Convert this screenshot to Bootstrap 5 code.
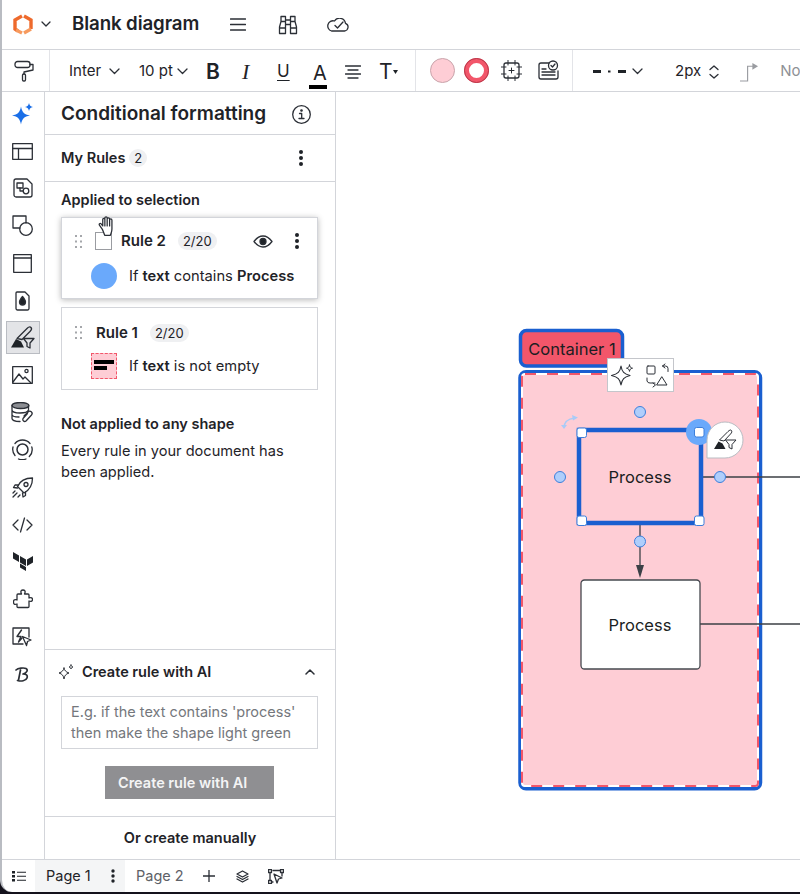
<!DOCTYPE html>
<html lang="en">
  <head>
    <meta charset="UTF-8" />
    <meta name="viewport" content="width=device-width, initial-scale=1.0" />
    <title>Blank diagram</title>
    <link
      href="https://cdn.jsdelivr.net/npm/bootstrap@5.3.0/dist/css/bootstrap.min.css"
      rel="stylesheet"
    />
    <style>
      html, body { height: 100%; overflow: hidden; background: #14121c; }
      body { font-family: Inter, "Liberation Sans", sans-serif; color: #1f2328; }
      svg { display: block; flex: none; }
      .ic { fill: none; stroke: #2b2f36; stroke-width: 1.3; stroke-linecap: round; stroke-linejoin: round; }
      .app-frame { height: 892px; background: #fff; border-left: 2px solid #b9bcc2; border-bottom-left-radius: 12px; overflow: hidden; }
      .top-bar { height: 49px; flex: none; padding-left: 11px; }
      .logo-gap { margin-left: 8px; }
      .doc-title { font-size: 18.700px; font-weight: 600; margin: 0 31px 0 21px; letter-spacing: -.1px; line-height: 1; }
      .binoc-gap { margin-left: 32px; }
      .cloud-gap { margin-left: 29px; }
      .tool-bar { height: 43px; flex: none; border-top: 1.5px solid #d3d5da; border-bottom: 1.5px solid #d3d5da; overflow: hidden; }
      .tool-sec { height: 100%; flex: none; border-right: 1.5px solid #e3e4e8; }
      .sec-paint { width: 48px; padding-left: 12px; }
      .sec-text { width: 366px; padding: 2px 0 0 19px; font-size: 15px; }
      .sec-shape { width: 157px; padding-left: 14px; }
      .sec-line { flex: none; padding: 2px 0 0 20px; font-size: 15px; white-space: nowrap; }
      .t-font { width: 70px; }
      .t-size { width: 67px; }
      .t-b { width: 36px; font-size: 21px; font-weight: 600; line-height: 1; }
      .t-i { width: 35px; font-family: "Liberation Serif", serif; font-size: 22px; font-style: italic; line-height: 1; }
      .t-u { width: 32px; font-size: 17px; text-decoration: underline; text-decoration-thickness: 1px; text-underline-offset: 3px; }
      .t-a { width: 36px; font-size: 20px; padding-top: 8px; }
      .a-bar { height: 4px; width: 18px; background: #000; margin-top: 2px; }
      .t-al { width: 34px; }
      .t-t { font-size: 21px; font-weight: 400; }
      .swatch { width: 25px; height: 25px; border-radius: 50%; }
      .swatch-fill { background: #fecdd5; border: 1px solid #c9a4ab; margin-right: 9px; }
      .swatch-line { background: #fff; border: 5px solid #f2566a; outline: 1px solid #b7394a; outline-offset: -1px; margin-right: 12px; }
      .dash-gap { margin-right: 5px; }
      .width-gap { margin-left: 32px; }
      .corner-gap { margin-left: 21px; }
      .none-gap { margin-left: 21px; color: #8f9196; }
      .main-row { min-height: 0; }
      .side-rail { width: 43px; flex: none; border-right: 1.5px solid #d3d5da; padding-top: 3px; }
      .rail-btn { width: 35px; height: 37.400px; margin-left: 3px; }
      .rail-on { background: #e3e4e7; border: 1px solid #b9bcc2; height: 33px; margin: 2px 0 2px 4px; width: 34px; }
      .side-panel { width: 291px; flex: none; border-right: 1.5px solid #d3d5da; font-size: 15px; }
      .panel-head { height: 43px; flex: none; padding: 3px 24px 0 16px; border-bottom: 1.5px solid #d3d5da; }
      .panel-head h1 { font-size: 19px; font-weight: 600; margin: 0; }
      .rules-head { height: 47px; flex: none; padding: 0 32px 0 16px; border-bottom: 1.5px solid #d3d5da; }
      .sec-label { font-size: 14.500px; font-weight: 600; }
      .count-pill { background: #eff0f2; border-radius: 9px; font-size: 13px; padding: 0 5px; line-height: 18px; font-weight: 400; }
      .applied { padding: 7px 17px 0 16px; }
      .rule-box { background: #fff; border: 1.5px solid #d3d5da; position: relative; }
      .rule-lift { height: 82px; box-shadow: 0 1px 6px rgba(0,0,0,.28); margin-top: 6px; }
      .rule-plain { height: 83px; margin-top: 8px; }
      .rule-top { height: 45px; padding: 2px 18px 0 13px; }
      .rule-plain .rule-top { padding-top: 5px; }
      .rule-name { font-size: 15px; font-weight: 600; margin-right: 12px; }
      .rule-blank { width: 17px; height: 18px; border: 1px solid #9a9ca1; margin: 0 9px 0 13px; }
      .grip-gap { margin-right: 14px; }
      .eye-gap { margin-right: 22px; }
      .rule-line { font-size: 14.700px; padding-left: 29px; }
      .rule-dot { width: 26px; height: 26px; border-radius: 50%; background: #6aa9fb; margin-right: 12px; flex: none; }
      .rule-swatch { width: 26px; height: 26px; background: #fecdd5; border: 1px dashed #f2566a; margin-right: 12px; padding: 6px 2px; flex: none; }
      .rule-swatch i { display: block; height: 4px; background: #000; margin-bottom: 2px; }
      .rule-swatch i + i { width: 13px; margin-bottom: 0; }
      .hand-cursor { position: absolute; left: 36px; top: -2px; }
      .not-applied { padding: 23px 30px 0 16px; }
      .not-applied p { font-size: 14.600px; line-height: 21px; margin: 6px 0 0; }
      .ai-box { margin-top: auto; border-top: 1.5px solid #d3d5da; flex: none; }
      .ai-head { height: 46px; padding: 0 20px 3px 13px; }
      .ai-spark { margin-right: 8px; }
      .ai-input { margin: 0 17px 0 16px; border: 1.5px solid #d3d5da; height: 53px; padding: 4px 9px; font-size: 14.500px; line-height: 21px; color: #74777c; white-space: nowrap; overflow: hidden; }
      .ai-btn { width: 169px; height: 33px; margin: 17px 0 17px 60px; padding: 0 0 0 13px; background: #8f8f92; color: #f4f4f5; border-radius: 0; border: 0; font-size: 14.500px; font-weight: 600; text-align: left; }
      .manual-row { height: 43px; flex: none; border-top: 1.5px solid #d3d5da; font-size: 14.500px; font-weight: 600; }
      .bottom-bar { height: 33px; flex: none; border-top: 1.5px solid #d3d5da; font-size: 14.500px; padding-left: 10px; }
      .page-on { width: 90px; height: 100%; margin-left: 9px; padding: 0 10px 0 11px; background: #f4f5f6; }
      .page-off { color: #5e6167; margin: 0 19px 0 11px; }
      .add-gap { margin-right: 21px; }
      .layer-gap { margin-right: 19px; }
      .canvas-area { position: relative; overflow: hidden; background: #fff; }
      .canvas-art { position: absolute; left: 0; top: 0; }
      .shape-text { font-family: Inter, "Liberation Sans", sans-serif; font-size: 16.500px; fill: #1b1e22; text-anchor: middle; }
    </style>
  </head>
  <body>
    <div class="app-frame d-flex flex-column position-relative">
      <header class="top-bar d-flex align-items-center">
        <svg width="20" height="21" viewBox="0 0 20 21" fill="none" stroke-width="3.400">
          <path d="M9 2 2 6v9l3 2" stroke="#ee6a2c"/>
          <path d="M11 2l7 4v9" stroke="#ee6a2c"/>
          <path d="M18 15l-7 4" stroke="#f79a5e"/>
          <path d="M3 16l6 3" stroke="#f79a5e"/>
        </svg>
        <svg class="ic logo-gap" width="10" height="7" viewBox="0 0 10 7"><path d="M1 1l4 4 4-4"/></svg>
        <div class="doc-title">Blank diagram</div>
        <svg class="ic" width="16" height="13" viewBox="0 0 16 13"><path d="M.5 1h15M.5 6.500h15M.5 12h15"/></svg>
        <svg class="ic binoc-gap" width="20" height="20" viewBox="0 0 20 20"><path d="M3 1.500h4.500v5H3zM12.500 1.500H17v5h-4.500zM7.500 5h5v4.500h-5zM3 6.500 1.500 12v6.500h6V9.500M17 6.500l1.500 5.500v6.500h-6V9.500M1.500 13h6M12.500 13h6"/></svg>
        <svg class="ic cloud-gap" width="22" height="14" viewBox="0 0 22 14"><path d="M4.500 13h13a4 4 0 0 0 1-7.700 6 6 0 0 0-11-2.300 4.800 4.800 0 0 0-3 10zM8 7.500l2.500 2.500 5.500-6"/></svg>
      </header>

      <div class="tool-bar d-flex align-items-center">
        <div class="tool-sec sec-paint d-flex align-items-center">
          <svg class="ic" width="21" height="22" viewBox="0 0 21 22"><rect x="1" y="1.500" width="15" height="6" rx="2.500"/><path d="M16 4.500h3v5.500l-9 2v2"/><rect x="8.500" y="14" width="3" height="7" rx="1.200"/></svg>
        </div>
        <div class="tool-sec sec-text d-flex align-items-center">
          <div class="t-font d-flex align-items-center gap-2">Inter <svg class="ic" width="11" height="7" viewBox="0 0 11 7"><path d="M1 1l4.500 4.500L10 1"/></svg></div>
          <div class="t-size d-flex align-items-center gap-1 text-nowrap">10 pt <svg class="ic" width="11" height="7" viewBox="0 0 11 7"><path d="M1 1l4.500 4.500L10 1"/></svg></div>
          <div class="t-b">B</div>
          <div class="t-i">I</div>
          <div class="t-u">U</div>
          <div class="t-a d-flex flex-column align-items-start lh-1"><span class="ms-1">A</span><div class="a-bar"></div></div>
          <div class="t-al"><svg class="ic" width="16" height="14" viewBox="0 0 16 14"><path d="M.5 1h15M3 5h10M.5 9h15M3 13h10"/></svg></div>
          <div class="t-t d-flex align-items-center">T<svg width="5" height="4" viewBox="0 0 5 4"><path d="M0 0h5L2.500 4z" fill="#1f2328"/></svg></div>
        </div>
        <div class="tool-sec sec-shape d-flex align-items-center">
          <div class="swatch swatch-fill"></div>
          <div class="swatch swatch-line"></div>
          <svg class="ic me-3" width="21" height="21" viewBox="0 0 21 21"><rect x="3" y="3" width="15" height="15" rx="2"/><path d="M7 0v5M14 0v5M7 16v5M14 16v5M0 7h5M0 14h5M16 7h5M16 14h5M10.500 8v5M8 10.500h5" stroke-width="1"/></svg>
          <svg class="ic" width="21" height="21" viewBox="0 0 21 21"><path d="M11 3H3a2 2 0 0 0-2 2v12a2 2 0 0 0 2 2h15a2 2 0 0 0 2-2v-6M4 9h4M4 12h13M4 15h13"/><circle cx="15" cy="5.500" r="4.500"/><path d="M13 5.500l1.500 1.500 2.500-3"/></svg>
        </div>
        <div class="sec-line d-flex align-items-center">
          <svg class="dash-gap" width="34" height="3" viewBox="0 0 34 3"><path d="M0 0h8v3H0zM15 .5h2.500v2H15zM25 0h8v3h-8z" fill="#1f2328"/></svg>
          <svg class="ic" width="11" height="7" viewBox="0 0 11 7"><path d="M1 1l4.500 4.500L10 1"/></svg>
          <span class="width-gap">2px</span>
          <svg class="ic ms-2" width="10" height="14" viewBox="0 0 10 14"><path d="M1 4.500 5 1l4 3.500M1 9.500 5 13l4-3.500"/></svg>
          <svg class="corner-gap" width="19" height="20" viewBox="0 0 20 20"><path d="M0 19.500h8V4h7" fill="none" stroke="#9a9ca1" stroke-width="1.200"/><path d="M13 .5 19 4l-6 3.500z" fill="#9a9ca1"/></svg>
          <span class="none-gap">No</span>
        </div>
      </div>

      <div class="main-row d-flex flex-grow-1">
        <nav class="side-rail d-flex flex-column">
          <div class="rail-btn d-flex align-items-center justify-content-center">
            <svg width="22" height="22" viewBox="0 0 22 22"><path d="M9 3.500C10 9 12 11.500 18 12.500 12 13.500 10 16 9 21.500 8 16 6 13.500 0 12.500 6 11.500 8 9 9 3.500Z" fill="#1a6fe8"/><path d="M17 0c.5 2.500 1.500 3.500 4 4-2.500.5-3.500 1.500-4 4-.5-2.500-1.500-3.500-4-4 2.500-.5 3.500-1.500 4-4Z" fill="#1a6fe8"/></svg>
          </div>
          <div class="rail-btn d-flex align-items-center justify-content-center">
            <svg class="ic" width="21" height="17" viewBox="0 0 21 17"><rect x=".7" y=".7" width="19.600" height="15.600"/><path d="M.7 5.500h19.600M6.500 5.500v10.800"/></svg>
          </div>
          <div class="rail-btn d-flex align-items-center justify-content-center">
            <svg class="ic" width="20" height="20" viewBox="0 0 20 20"><path d="M3 1h11l5 5v11a2 2 0 0 1-2 2H3a2 2 0 0 1-2-2V3a2 2 0 0 1 2-2Z"/><rect x="4" y="5" width="6" height="5"/><circle cx="13" cy="13" r="2.800"/><path d="M7 10v3h3"/></svg>
          </div>
          <div class="rail-btn d-flex align-items-center justify-content-center">
            <svg class="ic" width="21" height="21" viewBox="0 0 21 21"><path d="M8 13H1V1h13v7"/><circle cx="14" cy="14" r="6.300"/></svg>
          </div>
          <div class="rail-btn d-flex align-items-center justify-content-center">
            <svg class="ic" width="19" height="19" viewBox="0 0 19 19"><rect x=".7" y=".7" width="17.600" height="17.600"/><path d="M.7 4h17.600"/></svg>
          </div>
          <div class="rail-btn d-flex align-items-center justify-content-center">
            <svg class="ic" width="15" height="20" viewBox="0 0 15 20"><path d="M2 1h8l4 4v12.500a1.500 1.500 0 0 1-1.500 1.500h-10A1.500 1.500 0 0 1 1 17.500V2a1 1 0 0 1 1-1Z"/><path d="M7.500 5.500c2 2.500 3 4 3 5.500a3 3 0 0 1-6 0c0-1.500 1-3 3-5.500Z" fill="#1f2328"/></svg>
          </div>
          <div class="rail-btn rail-on d-flex align-items-center justify-content-center">
            <svg width="24" height="23" viewBox="0 0 24 23"><path d="M0 21.500 5 13l5 2.500 3 6z" fill="#1f2328"/><path class="ic" d="M6 12.500 16 2.500c1.500-1.500 3-2 4-1s.5 2.500-1 4L11 13.500ZM12.500 12.500H23l-4 4.500v5l-3-1.500V17Z" fill="#e3e4e7" stroke-width="1.100"/></svg>
          </div>
          <div class="rail-btn d-flex align-items-center justify-content-center">
            <svg class="ic" width="21" height="18" viewBox="0 0 21 18"><rect x=".7" y=".7" width="19.600" height="16.600"/><circle cx="14.500" cy="5" r="1.600"/><path d="M1 16 7 8l4 5 2-2 6 6"/></svg>
          </div>
          <div class="rail-btn d-flex align-items-center justify-content-center">
            <svg class="ic" width="23" height="21" viewBox="0 0 23 21"><ellipse cx="9.500" cy="3.500" rx="8.500" ry="3" fill="#8b8d92"/><path d="M1 3.500v13c0 1.500 3 3 8 3M1 8c0 1.500 3 3 8 3s8-1 8.500-3V4M1 12.500c0 1.500 3 2.500 7 2.500"/><path d="M13 14l4-4a2.200 2.200 0 0 1 3.500 3l-5.500 6a2 2 0 0 1-3-2.500l4.500-5"/></svg>
          </div>
          <div class="rail-btn d-flex align-items-center justify-content-center">
            <svg class="ic" width="21" height="21" viewBox="0 0 21 21"><circle cx="10.500" cy="10.500" r="5.500" stroke-width="1.500"/><path d="M3 4.500a9.800 9.800 0 0 1 15 0M19.800 8a9.800 9.800 0 0 1-2.500 9.500M14 20a9.800 9.800 0 0 1-7.500 0M3 16.500A9.800 9.800 0 0 1 1 8"/></svg>
          </div>
          <div class="rail-btn d-flex align-items-center justify-content-center">
            <svg class="ic" width="22" height="21" viewBox="0 0 22 21"><path d="M8 12 5.500 9.500C8 4 13 1 20.500 1 20.500 8.500 17.500 13 12 16Z"/><circle cx="14" cy="7.500" r="2"/><path d="M6.500 8H3L1.500 10.500l4 .5M13.500 15v3.500L11 20l-.5-4M1 20l4-4M1 16l2-2M6 20l2-2"/></svg>
          </div>
          <div class="rail-btn d-flex align-items-center justify-content-center">
            <svg class="ic" width="21" height="16" viewBox="0 0 21 16"><path d="M6 3 1 8l5 5M15 3l5 5-5 5M12.500 1 8.500 15"/></svg>
          </div>
          <div class="rail-btn d-flex align-items-center justify-content-center">
            <svg width="20" height="19" viewBox="0 0 20 19"><path d="M0 0l6 3.500v6.500L0 6.500zM7 4l6 3.500V14L7 10.500zM7 11.500 13 15v4L7 15.500zM14 7.500 20 4v6.500L14 14z" fill="#1f2328"/></svg>
          </div>
          <div class="rail-btn d-flex align-items-center justify-content-center">
            <svg class="ic" width="20" height="20" viewBox="0 0 20 20"><path d="M5 5h3.500C7 2 8.500 1 10 1s3 1 1.500 4H15c.7 0 1 .4 1 1v3c2.500-1 3.500 0 3.500 1.500S18.500 13 16 12v5.500c0 .7-.4 1-1 1H5c-.6 0-1-.4-1-1V15c-3 1-3.500-.5-3.500-2s.5-3 3.500-2V6c0-.6.4-1 1-1Z"/></svg>
          </div>
          <div class="rail-btn d-flex align-items-center justify-content-center">
            <svg class="ic" width="21" height="20" viewBox="0 0 21 20"><path d="M11 17H1V1h16v9"/><path d="M9.500 3 5 9.500h4L6.500 15l3.500-4" stroke-width="1.400"/><path d="M10.500 9.500 19 13l-3.500 1.500L14.500 18.500z" fill="#fff"/></svg>
          </div>
          <div class="rail-btn d-flex align-items-center justify-content-center">
            <svg class="ic" width="15" height="15" viewBox="0 0 15 15"><path d="M1 3c2-2 8-2.500 10-1.500S12.500 6 8 7c3 0 5 1 4 4s-6 3.500-9.500 2.500M5.500 3 3.500 13" stroke-width="1.700"/></svg>
          </div>
        </nav>

        <aside class="side-panel d-flex flex-column">
          <div class="panel-head d-flex align-items-center justify-content-between">
            <h1>Conditional formatting</h1>
            <svg class="ic" width="19" height="19" viewBox="0 0 19 19"><circle cx="9.500" cy="9.500" r="8.800"/><path d="M7.500 8.500h2.200v5M7 13.500h5"/><circle cx="9.500" cy="5.500" r=".7" fill="#2b2f36"/></svg>
          </div>
          <div class="rules-head d-flex align-items-center">
            <span class="sec-label me-1">My Rules</span>
            <span class="count-pill">2</span>
            <svg class="ms-auto" width="4" height="16" viewBox="0 0 4 16"><circle cx="2" cy="2" r="2" fill="#1f2328"/><circle cx="2" cy="8" r="2" fill="#1f2328"/><circle cx="2" cy="14" r="2" fill="#1f2328"/></svg>
          </div>
          <div class="applied">
            <div class="sec-label">Applied to selection</div>
            <div class="rule-box rule-lift">
              <div class="rule-top d-flex align-items-center">
                <svg width="7" height="13" viewBox="0 0 7 13"><path d="M0 0h2v2H0zM5 0h2v2H5zM0 5.500h2v2H0zM5 5.500h2v2H5zM0 11h2v2H0zM5 11h2v2H5z" fill="#a5a7ab"/></svg>
                <div class="rule-blank"></div>
                <span class="rule-name">Rule 2</span>
                <span class="count-pill">2/20</span>
                <svg class="ic ms-auto eye-gap" width="20" height="13" viewBox="0 0 20 13"><path d="M1 6.500C4 2.500 7 1 10 1s6 1.500 9 5.500C16 10.500 13 12 10 12S4 10.500 1 6.500Z"/><circle cx="10" cy="6.500" r="3" fill="#1f2328"/></svg>
                <svg width="4" height="16" viewBox="0 0 4 16"><circle cx="2" cy="2" r="2" fill="#1f2328"/><circle cx="2" cy="8" r="2" fill="#1f2328"/><circle cx="2" cy="14" r="2" fill="#1f2328"/></svg>
              </div>
              <div class="rule-line d-flex align-items-center">
                <div class="rule-dot"></div>
                <span>If <b class="fw-semibold">text</b> contains <b class="fw-semibold">Process</b></span>
              </div>
              <svg class="hand-cursor ic" width="19" height="22" viewBox="0 0 18 20"><path d="M4 12 1.500 8.500c-1-1.500.5-2.500 1.500-1.500L4.500 9V3c0-1.500 2-1.500 2 0V1.500c0-1.500 2.200-1.500 2.200 0v1c0-1.500 2.300-1.500 2.300 0v1c0-1.500 2.200-1.500 2.200 0v8.500c0 3-1 4-1.500 6H6.500C5.500 16 5 14 4 12ZM6.500 3v6M8.700 2v7M11 3v6" fill="#fff" stroke-width="1.200"/></svg>
            </div>
            <div class="rule-box rule-plain">
              <div class="rule-top d-flex align-items-center">
                <svg class="grip-gap" width="7" height="13" viewBox="0 0 7 13"><path d="M0 0h2v2H0zM5 0h2v2H5zM0 5.500h2v2H0zM5 5.500h2v2H5zM0 11h2v2H0zM5 11h2v2H5z" fill="#a5a7ab"/></svg>
                <span class="rule-name">Rule 1</span>
                <span class="count-pill">2/20</span>
              </div>
              <div class="rule-line d-flex align-items-center">
                <div class="rule-swatch"><i></i><i></i></div>
                <span>If <b class="fw-semibold">text</b> is not empty</span>
              </div>
            </div>
          </div>
          <div class="not-applied">
            <div class="sec-label">Not applied to any shape</div>
            <p>Every rule in your document has been applied.</p>
          </div>
          <div class="ai-box">
            <div class="ai-head d-flex align-items-center">
              <svg class="ic ai-spark" width="16" height="16" viewBox="0 0 16 16"><path d="M6 4c.5 2.500 1.800 4 5 5-3.200 1-4.500 2.500-5 6-.5-3.500-1.800-5-5-6 3.200-1 4.500-2.500 5-5ZM13 1c.2 1 .8 1.800 2 2-1.200.2-1.800 1-2 2-.2-1-.8-1.800-2-2 1.200-.2 1.800-1 2-2Z" stroke-width="1"/></svg>
              <span class="sec-label">Create rule with AI</span>
              <svg class="ic ms-auto" width="10" height="6" viewBox="0 0 10 6"><path d="M1 5l4-4 4 4" stroke-width="1.500"/></svg>
            </div>
            <div class="ai-input">E.g. if the text contains 'process'<br />then make the shape light green</div>
            <button type="button" class="btn ai-btn d-block">Create rule with AI</button>
            <div class="manual-row d-flex align-items-center justify-content-center">Or create manually</div>
          </div>
        </aside>

        <main class="canvas-area flex-grow-1">
          <!-- viewBox keeps diagram coordinates in page pixels -->
          <svg class="canvas-art" width="464" height="767" viewBox="336 92 464 767">
            <rect x="520" y="371.700" width="240.500" height="417" rx="6" fill="#fecdd5" stroke="#1a5fd0" stroke-width="3.500"/>
            <rect x="522" y="374" width="236" height="412" rx="3" fill="none" stroke="#fff" stroke-width="2"/>
            <rect x="522" y="374" width="236" height="412" rx="3" fill="none" stroke="#f2566a" stroke-width="2" stroke-dasharray="11 11"/>
            <rect x="520.500" y="330.500" width="102" height="35.500" rx="6" fill="#f2566a" stroke="#1a5fd0" stroke-width="3.500"/>
            <text class="shape-text" x="572" y="354.500">Container 1</text>

            <rect x="607.500" y="358.500" width="66" height="33" fill="#fff" stroke="#c4c6cb"/>
            <g class="ic" fill="none">
              <path d="M621 366c1 6 3 8 9 9.500-6 1.500-8 3.500-9 9.500-1-6-3-8-9.500-9.500 6.500-1.500 8.500-3.500 9.500-9.500Z" stroke-width="1.100"/>
              <path d="M629.500 365c.3 2 1 2.800 3 3.200-2 .4-2.700 1.200-3 3.200-.3-2-1-2.800-3-3.200 2-.4 2.700-1.200 3-3.200Z" stroke-width="1"/>
              <rect x="647" y="366" width="8" height="8" rx="1" stroke-width="1"/>
              <path d="M665 368l-2.500-2 2.500-2M662.500 366h3a2.500 2.500 0 0 1 2.500 2.500v3M653 383l2.500 2-2.500 2M647 378v3a3 3 0 0 0 3 2h5" stroke-width="1"/>
              <path d="M662 377l5 8h-10z" stroke-width="1"/>
            </g>

            <path d="M702 477H800M697 624H800" stroke="#3c4046" stroke-width="1.300"/>
            <path d="M640 523V568" stroke="#3c4046" stroke-width="1.300"/>
            <path d="M636 565h8l-4 13z" fill="#3c4046"/>

            <rect x="581" y="580" width="119" height="89" rx="3.500" fill="#fff" stroke="#45494f" stroke-width="1.300"/>
            <text class="shape-text" x="640" y="630.500">Process</text>

            <rect x="579" y="430" width="122" height="93" fill="#fecdd5" stroke="#1a5fd0" stroke-width="4.500"/>
            <text class="shape-text" x="640" y="483">Process</text>

            <circle cx="699" cy="432" r="13" fill="#6aa9fb"/>
            <g fill="#fff" stroke="#3d7fdb" stroke-width="1">
              <rect x="577" y="428" width="9.500" height="9.500" rx="2"/>
              <rect x="694.500" y="427.500" width="9.500" height="9.500" rx="2"/>
              <rect x="577" y="516" width="9.500" height="9.500" rx="2"/>
              <rect x="694.500" y="516" width="9.500" height="9.500" rx="2"/>
            </g>
            <g fill="#afcefb" stroke="#3d7fdb" stroke-width="1">
              <circle cx="640" cy="412" r="5.500"/>
              <circle cx="560" cy="477" r="5.500"/>
              <circle cx="720" cy="477" r="5.500"/>
              <circle cx="640" cy="541.500" r="5.500"/>
            </g>
            <path d="M564 428c0-6 3-9 11-10" fill="none" stroke="#a9cbf7" stroke-width="1.500"/>
            <path d="M561 425l3 4 3-4M572 415l6 2.500-5 3z" fill="#a9cbf7"/>

            <path d="M707 440a18 18 0 1 1 18 18h-18z" fill="#fff" stroke="#b9bcc2"/>
            <g transform="translate(714 429)">
              <path d="M0 20 4.500 12.500l4 2 3 5.500z" fill="#1f2328"/>
              <path d="M5.500 11 14 2.500c1.500-1.500 3-2 3.500-1s.5 2-1 3.500L10 12ZM11.500 11H22l-4 4.500v4.500l-3-1.500v-3Z" fill="#fff" stroke="#2b2f36" stroke-width="1"/>
            </g>
          </svg>
        </main>
      </div>

      <footer class="bottom-bar d-flex align-items-center">
        <svg width="14" height="11" viewBox="0 0 14 11"><path d="M0 0h3v2.500H0zM0 4h3v2.500H0zM0 8h3v2.500H0z" fill="#1f2328"/><path d="M5 1.250h9M5 5.250h9M5 9.250h9" stroke="#1f2328" stroke-width="1.200"/></svg>
        <div class="page-on d-flex align-items-center justify-content-between">
          <span>Page 1</span>
          <svg width="4" height="14" viewBox="0 0 4 14"><circle cx="2" cy="2" r="1.700" fill="#1f2328"/><circle cx="2" cy="7" r="1.700" fill="#1f2328"/><circle cx="2" cy="12" r="1.700" fill="#1f2328"/></svg>
        </div>
        <span class="page-off">Page 2</span>
        <svg class="ic add-gap" width="12" height="12" viewBox="0 0 12 12"><path d="M6 0v12M0 6h12"/></svg>
        <svg class="ic layer-gap" width="13" height="13" viewBox="0 0 13 13"><path d="M6.500 1 12 4 6.500 7 1 4zM1 6.500l5.500 3 5.500-3M1 9l5.500 3L12 9"/></svg>
        <svg class="ic" width="16" height="15" viewBox="0 0 16 15"><path d="M2 2v11h3M5 1.500h9M14 2v5"/><path d="M6 5l8 4-3.500 1L9 14z"/><rect x=".5" y=".5" width="3" height="3" fill="#fff"/><rect x="12.500" y=".5" width="3" height="3" fill="#fff"/><rect x=".5" y="11.500" width="3" height="3" fill="#fff"/></svg>
      </footer>
    </div>
  </body>
</html>
